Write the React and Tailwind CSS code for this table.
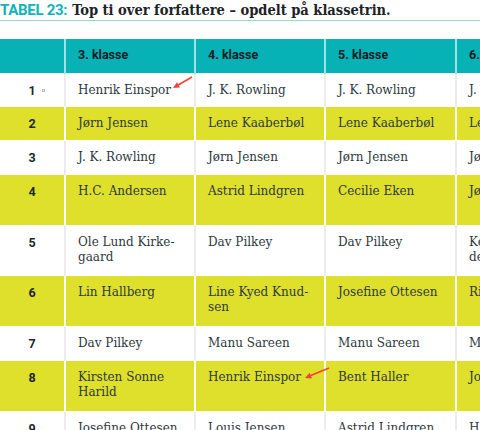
import React from 'react'

const columns = ['3. klasse', '4. klasse', '5. klasse', '6. klasse']

const rows = [
  { n: 1, tall: false, cells: ['Henrik Einspor', 'J. K. Rowling', 'J. K. Rowling', 'J. K. Rowling'] },
  { n: 2, tall: false, cells: ['Jørn Jensen', 'Lene Kaaberbøl', 'Lene Kaaberbøl', 'Lene Kaaberbøl'] },
  { n: 3, tall: false, cells: ['J. K. Rowling', 'Jørn Jensen', 'Jørn Jensen', 'Jørn Jensen'] },
  { n: 4, tall: true, cells: ['H.C. Andersen', 'Astrid Lindgren', 'Cecilie Eken', 'Jørn Jensen'] },
  { n: 5, tall: true, cells: ['Ole Lund Kirke-\ngaard', 'Dav Pilkey', 'Dav Pilkey', 'Kenneth Bøgh\ndersen'] },
  { n: 6, tall: true, cells: ['Lin Hallberg', 'Line Kyed Knud-\nsen', 'Josefine Ottesen', 'Rick Riordan'] },
  { n: 7, tall: false, cells: ['Dav Pilkey', 'Manu Sareen', 'Manu Sareen', 'Manu Sareen'] },
  { n: 8, tall: true, cells: ['Kirsten Sonne\nHarild', 'Henrik Einspor', 'Bent Haller', 'Josefine Ottesen'] },
  { n: 9, tall: false, cells: ['Josefine Ottesen', 'Louis Jensen', 'Astrid Lindgren', 'H.C. Andersen'] },
]

function Arrow({ x1, y1, x2, y2 }) {
  const a = Math.atan2(y2 - y1, x2 - x1)
  const l = 7
  const p1 = [x2 - l * Math.cos(a - 0.45), y2 - l * Math.sin(a - 0.45)]
  const p2 = [x2 - l * Math.cos(a + 0.45), y2 - l * Math.sin(a + 0.45)]
  return (
    <g>
      <line x1={x1} y1={y1} x2={x2 - 3 * Math.cos(a)} y2={y2 - 3 * Math.sin(a)} stroke="#f0443a" strokeWidth="1.6" />
      <polygon points={`${x2},${y2} ${p1[0]},${p1[1]} ${p2[0]},${p2[1]}`} fill="#f0443a" />
    </g>
  )
}

export default function App() {
  return (
    <div className="relative w-[480px] h-[430px] overflow-hidden bg-white">
      {/* Title */}
      <div className="h-[21px] border-b border-[#8fd8da] flex items-start pt-[1px] whitespace-nowrap">
        <span className="text-[#12b3b6] text-[15px] leading-[18px] font-bold tracking-[-0.3px]" style={{ fontFamily: 'Roboto, sans-serif' }}>
          TABEL 23:
        </span>
        <span className="ml-[5px] text-[#1b2327] text-[14.5px] leading-[18px] font-bold" style={{ fontFamily: '"DejaVu Serif Condensed", "DejaVu Serif", serif' }}>
          Top ti over forfattere – opdelt på klassetrin.
        </span>
      </div>

      <div className="mt-[18px]">
        <table className="table-fixed border-collapse w-[715px]">
          <colgroup>
            <col className="w-[65px]" />
            <col className="w-[130px]" />
            <col className="w-[130px]" />
            <col className="w-[131px]" />
            <col className="w-[130px]" />
            <col className="w-[129px]" />
          </colgroup>
          <thead>
            <tr className="h-[34px] bg-[#07b2b6]">
              <th className="border-r-2 border-[#9fe0e2]" />
              {columns.map((c) => (
                <th
                  key={c}
                  className="border-r-2 border-[#9fe0e2] text-left pl-[12px] text-[12.5px] font-bold text-[#132026]"
                  style={{ fontFamily: 'Roboto, sans-serif' }}
                >
                  {c}
                </th>
              ))}
              <th />
            </tr>
          </thead>
          <tbody>
            {rows.map((r, i) => {
              const yellow = i % 2 === 1
              const line = yellow ? 'border-white' : 'border-[#ececec]'
              return (
                <tr
                  key={r.n}
                  className={`${r.tall ? 'h-[50.75px]' : 'h-[33.75px]'} ${yellow ? 'bg-[#dfe02b]' : 'bg-white'} border-t border-white`}
                >
                  <td
                    className={`relative border-r-2 ${line} align-top pt-[9px] text-center text-[12.5px] leading-[15px] font-bold text-[#1c272c]`}
                    style={{ fontFamily: 'Roboto, sans-serif' }}
                  >
                    {r.n}
                    {r.n === 1 && (
                      <span className="absolute left-[42px] top-[15px] w-[3px] h-[3px] border border-[#b8b8b8]" />
                    )}
                  </td>
                  {r.cells.map((c, j) => (
                    <td
                      key={j}
                      className={`border-r-2 ${line} align-top pt-[9px] pl-[12px] text-[12px] leading-[15px] text-[#2e393e] whitespace-pre overflow-hidden`}
                      style={{ fontFamily: '"DejaVu Serif", serif' }}
                    >
                      {c}
                    </td>
                  ))}
                  <td />
                </tr>
              )
            })}
          </tbody>
        </table>
      </div>

      {/* annotation arrows */}
      <svg className="absolute left-0 top-0 pointer-events-none" width="480" height="430">
        <Arrow x1={192} y1={77} x2={173} y2={88} />
        <Arrow x1={329} y1={368} x2={305} y2={378} />
      </svg>
    </div>
  )
}
